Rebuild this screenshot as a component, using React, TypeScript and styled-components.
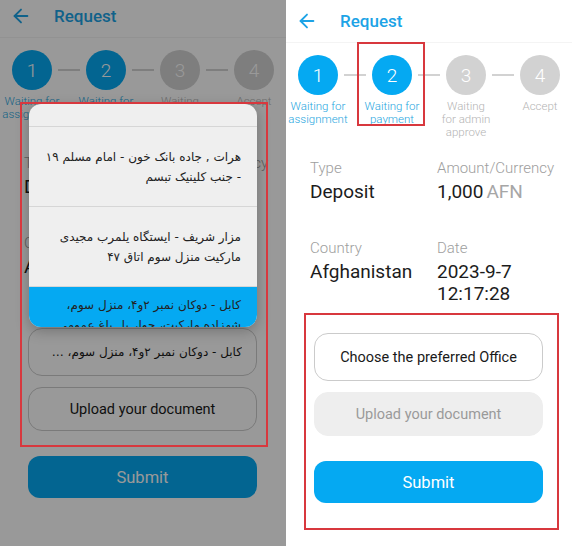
import styled, { createGlobalStyle } from "styled-components";
import { ArrowLeft } from "lucide-react";

const GlobalStyle = createGlobalStyle`
  html, body {
    margin: 0;
    padding: 0;
    background: #ffffff;
  }
  body {
    font-family: Roboto, "Noto Sans", "DejaVu Sans", sans-serif;
  }
`;

const Page = styled.div`
  display: flex;
  width: 572px;
  height: 546px;
`;

const Screen = styled.div`
  position: relative;
  width: 286px;
  height: 546px;
  overflow: hidden;
  background: #ffffff;
`;

const Content = styled.div<{ $shift: number }>`
  display: flex;
  flex-direction: column;
  margin-top: ${(p) => p.$shift}px;
`;

const Header = styled.header`
  display: flex;
  align-items: center;
  gap: 22px;
  height: 42px;
  padding-left: 10px;
  border-bottom: 1px solid #f4f4f4;
  color: #1ca3e6;
`;

const Title = styled.h1`
  margin: 0;
  font-size: 17px;
  font-weight: 500;
  color: #1ca3e6;
`;

const Steps = styled.div`
  display: flex;
  align-items: flex-start;
  padding: 12px 12px 0;
`;

const Step = styled.div`
  display: flex;
  flex-direction: column;
  align-items: center;
  width: 40px;
`;

const Circle = styled.div<{ $active: boolean }>`
  display: flex;
  align-items: center;
  justify-content: center;
  width: 40px;
  height: 40px;
  border-radius: 50%;
  background: ${(p) => (p.$active ? "#05a9f2" : "#d2d2d2")};
  color: #ffffff;
  font-size: 19px;
  font-weight: 300;
`;

const StepLabel = styled.div<{ $active: boolean }>`
  margin-top: 5px;
  font-size: 11.5px;
  line-height: 13px;
  font-weight: 300;
  text-align: center;
  white-space: pre;
  color: ${(p) => (p.$active ? "#27a6e0" : "#b4b4b4")};
`;

const Connector = styled.div`
  flex: none;
  width: 22px;
  height: 2px;
  margin: 19px 6px 0;
  background: #d2d2d2;
`;

const InfoGrid = styled.div`
  display: grid;
  grid-template-columns: 127px 1fr;
  row-gap: 36px;
  margin-top: 20px;
  padding-left: 24px;
`;

const InfoLabel = styled.div`
  font-size: 15px;
  line-height: 18px;
  font-weight: 300;
  color: #9e9e9e;
  white-space: nowrap;
`;

const InfoValue = styled.div`
  margin-top: 4px;
  font-size: 19px;
  line-height: 22px;
  color: #1c1c1c;
  white-space: nowrap;
`;

const Unit = styled.span`
  margin-left: 3px;
  color: #a6a6a6;
`;

const Actions = styled.div`
  display: flex;
  flex-direction: column;
  margin-top: 28px;
  padding: 0 29px 0 28px;
`;

const ChooseButton = styled.div`
  display: flex;
  align-items: center;
  justify-content: center;
  box-sizing: border-box;
  height: 48px;
  padding: 0 14px;
  border: 1px solid #cbcbcb;
  border-radius: 14px;
  background: #ffffff;
  font-size: 14.5px;
  color: #1a1a1a;
`;

const ChosenText = styled.span`
  flex: 1;
  min-width: 0;
  direction: rtl;
  text-align: right;
  font-family: "DejaVu Sans", sans-serif;
  font-size: 12px;
  white-space: nowrap;
  overflow: hidden;
  text-overflow: ellipsis;
`;

const UploadButton = styled.div<{ $disabled: boolean }>`
  display: flex;
  align-items: center;
  justify-content: center;
  box-sizing: border-box;
  height: 44px;
  margin-top: 11px;
  border-radius: 14px;
  border: 1px solid ${(p) => (p.$disabled ? "#eeeeee" : "#cbcbcb")};
  background: ${(p) => (p.$disabled ? "#eeeeee" : "#ffffff")};
  font-size: 14.5px;
  color: ${(p) => (p.$disabled ? "#9a9a9a" : "#1a1a1a")};
`;

const SubmitButton = styled.div`
  display: flex;
  align-items: center;
  justify-content: center;
  height: 42px;
  margin-top: 25px;
  border-radius: 12px;
  background: #05a9f2;
  font-size: 16.5px;
  color: #ffffff;
`;

const Scrim = styled.div`
  position: absolute;
  inset: 0;
  background: rgba(0, 0, 0, 0.4);
`;

const Dialog = styled.div`
  position: absolute;
  left: 29px;
  top: 104px;
  width: 228px;
  height: 223px;
  display: flex;
  flex-direction: column;
  border-radius: 12px;
  overflow: hidden;
  background: #efefef;
  box-shadow: 0 4px 14px rgba(0, 0, 0, 0.25);
`;

const Option = styled.div<{ $height: number; $selected?: boolean }>`
  flex: none;
  display: flex;
  flex-direction: column;
  justify-content: center;
  box-sizing: border-box;
  height: ${(p) => p.$height}px;
  padding: 0 16px;
  border-bottom: 1px solid ${(p) => (p.$selected ? "transparent" : "#d6d6d6")};
  background: ${(p) => (p.$selected ? "#05a9f2" : "transparent")};
  direction: rtl;
  text-align: right;
  font-family: "DejaVu Sans", sans-serif;
  font-size: 12px;
  line-height: 20px;
  color: #222222;
`;

const OptionLine = styled.span`
  display: block;
  white-space: nowrap;
`;

const Annotation = styled.div<{ $x: number; $y: number; $w: number; $h: number }>`
  position: absolute;
  left: ${(p) => p.$x}px;
  top: ${(p) => p.$y}px;
  width: ${(p) => p.$w}px;
  height: ${(p) => p.$h}px;
  box-sizing: border-box;
  border: 2px solid #d8383e;
  pointer-events: none;
`;

const steps = [
  { n: 1, label: "Waiting for\nassignment", active: true },
  { n: 2, label: "Waiting for\npayment", active: true },
  { n: 3, label: "Waiting\nfor admin\napprove", active: false },
  { n: 4, label: "Accept", active: false },
];

const kabul = "کابل - دوکان نمبر ۲و۴، منزل سوم، شهزاده مارکیت، جوار پل باغ عمومی";

const offices = [
  { lines: ["هرات , جاده بانک خون - امام مسلم ۱۹", "- جنب کلینیک تبسم"], height: 80 },
  { lines: ["مزار شریف - ایستگاه یلمرب مجیدی", "مارکیت منزل سوم اتاق ۴۷"], height: 80 },
];

type ScreenProps = { shift: number; picking: boolean };

const RequestScreen = ({ shift, picking }: ScreenProps) => (
  <Screen>
    <Content $shift={shift}>
      <Header>
        <ArrowLeft size={22} strokeWidth={2} />
        <Title>Request</Title>
      </Header>
      <Steps>
        {steps.map((s, i) => (
          <>
            {i > 0 && <Connector key={`c${s.n}`} />}
            <Step key={s.n}>
              <Circle $active={s.active}>{s.n}</Circle>
              <StepLabel $active={s.active}>{s.label}</StepLabel>
            </Step>
          </>
        ))}
      </Steps>
      <InfoGrid>
        <div>
          <InfoLabel>Type</InfoLabel>
          <InfoValue>Deposit</InfoValue>
        </div>
        <div>
          <InfoLabel>Amount/Currency</InfoLabel>
          <InfoValue>
            1,000<Unit>AFN</Unit>
          </InfoValue>
        </div>
        <div>
          <InfoLabel>Country</InfoLabel>
          <InfoValue>Afghanistan</InfoValue>
        </div>
        <div>
          <InfoLabel>Date</InfoLabel>
          <InfoValue>
            2023-9-7
            <br />
            12:17:28
          </InfoValue>
        </div>
      </InfoGrid>
      <Actions>
        <ChooseButton>
          {picking ? <ChosenText>{kabul}</ChosenText> : "Choose the preferred Office"}
        </ChooseButton>
        <UploadButton $disabled={!picking}>Upload your document</UploadButton>
        <SubmitButton>Submit</SubmitButton>
      </Actions>
    </Content>

    {picking && (
      <>
        <Scrim />
        <Dialog>
          <Option $height={23} />
          {offices.map((o) => (
            <Option key={o.lines[0]} $height={o.height}>
              {o.lines.map((l) => (
                <OptionLine key={l}>{l}</OptionLine>
              ))}
            </Option>
          ))}
          <Option $height={56} $selected>
            <OptionLine>کابل - دوکان نمبر ۲و۴، منزل سوم،</OptionLine>
            <OptionLine>شهزاده مارکیت، جوار پل باغ عمومی</OptionLine>
          </Option>
        </Dialog>
        <Annotation $x={20} $y={102} $w={248} $h={345} />
      </>
    )}

    {!picking && (
      <>
        <Annotation $x={71} $y={42} $w={68} $h={84} />
        <Annotation $x={18} $y={313} $w={255} $h={217} />
      </>
    )}
  </Screen>
);

export default function App() {
  return (
    <>
      <GlobalStyle />
      <Page>
        <RequestScreen shift={-5} picking />
        <RequestScreen shift={0} picking={false} />
      </Page>
    </>
  );
}
